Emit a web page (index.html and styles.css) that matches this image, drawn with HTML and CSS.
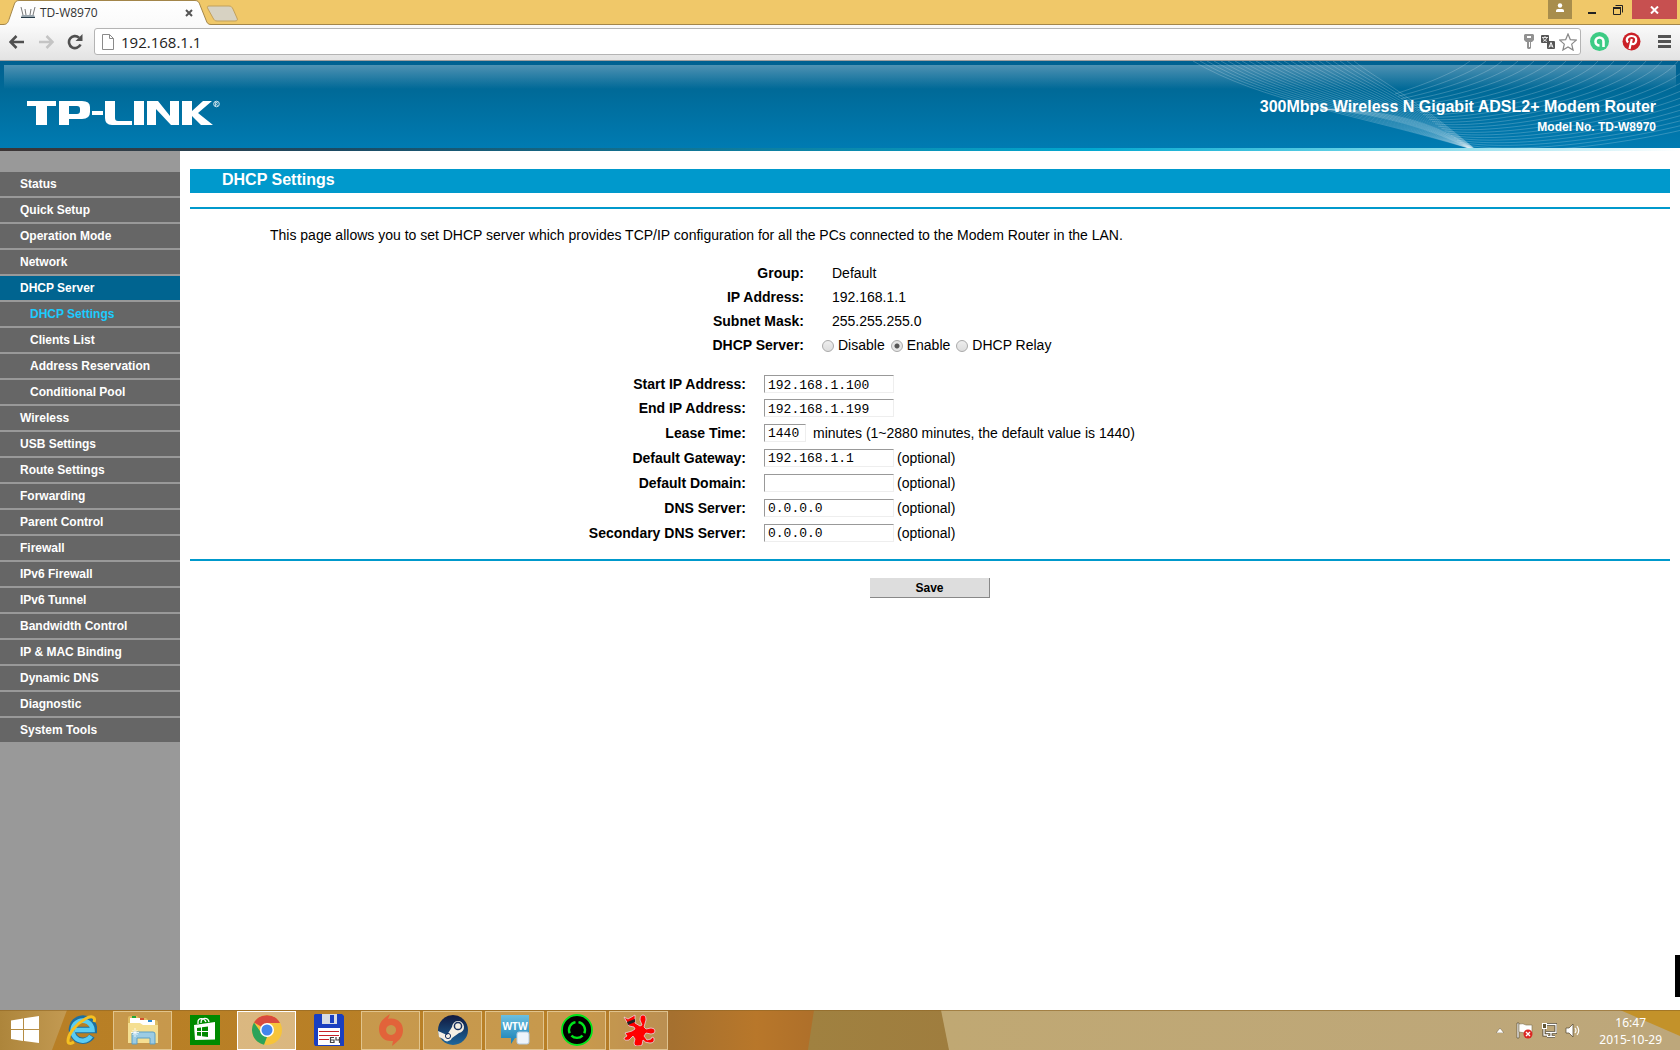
FILE: index.html
```html
<!DOCTYPE html>
<html lang="en">
<head>
<meta charset="utf-8">
<title>TD-W8970</title>
<link rel="stylesheet" href="styles.css">
</head>
<body>
<div class="desktop">
  <header class="browser">
    <div class="tabstrip">
      <svg class="tab-shape" width="240" height="26" viewBox="0 0 240 26">
        <defs><linearGradient id="tabfill" x1="0" y1="0" x2="0" y2="1"><stop offset="0" stop-color="#fff"/><stop offset="1" stop-color="#fafafa"/></linearGradient></defs>
        <path d="M0 24.500h3c4 0 5-2 6-5L14 5c1-3 2-4.500 5-4.500H195c3 0 4 1.500 5 4.500l6 15c1 3 2 4.500 5 4.500h29v2H0z" fill="url(#tabfill)"/>
        <path d="M0 24.500h3c4 0 5-2 6-5L14 5c1-3 2-4.500 5-4.500H195c3 0 4 1.500 5 4.500l6 15c1 3 2 4.500 5 4.500h29" fill="none" stroke="#a3864a"/>
        <path d="M209 6h20c2 0 3 1 4 3l4 9c1 2 0 3-2 3h-18c-2 0-3-1-4-3l-5-9c-1-2-1-3 1-3z" fill="#d7d2c2" stroke="#c2a15c"/>
      </svg>
      <div class="tab">
        <svg width="16" height="13" viewBox="0 0 16 13"><path d="M1 1l2 8M5 3l1 6M11 3l-1 6M15 1l-2 8" fill="none" stroke="#777" stroke-width="1"/><path d="M2 9h12l1 2H1z" fill="#9aa6ae"/><path d="M1 11h14v1H1z" fill="#263b48"/></svg>
        <span>TD-W8970</span>
        <button class="tab-close" type="button" aria-label="Close tab"><svg width="8" height="8" viewBox="0 0 8 8"><path d="M1 1l6 6M7 1l-6 6" stroke="#555" stroke-width="2"/></svg></button>
      </div>
      <div class="window-controls">
        <button class="user" type="button" aria-label="User"><svg width="10" height="10" viewBox="0 0 10 10"><circle cx="5" cy="2.500" r="2.200" fill="#fff"/><path d="M1 9V7.500Q1 6 3 6h4q2 0 2 1.500V9z" fill="#fff"/></svg></button>
        <button class="min" type="button" aria-label="Minimize"><svg width="10" height="10" viewBox="0 0 10 10"><path d="M1 7h8v2H1z" fill="#222"/></svg></button>
        <button class="max" type="button" aria-label="Restore"><svg width="10" height="10" viewBox="0 0 10 10"><path d="M.5 2.500h7v7h-7zM2.500 .5h7v7" fill="none" stroke="#222"/><path d="M0 2h8v2H0z" fill="#222"/></svg></button>
        <button class="close" type="button" aria-label="Close"><svg width="9" height="8" viewBox="0 0 9 8"><path d="M1 0.500l7 7M8 0.500l-7 7" stroke="#fff" stroke-width="2"/></svg></button>
      </div>
    </div>
    <div class="toolbar">
      <button class="nav-button" type="button" aria-label="Back"><svg width="16" height="14" viewBox="0 0 16 14"><path d="M1.500 7H15M7.500 1L1.500 7l6 6" fill="none" stroke="#505050" stroke-width="2.600"/></svg></button>
      <button class="nav-button" type="button" aria-label="Forward"><svg width="16" height="14" viewBox="0 0 16 14"><path d="M14.500 7H1M8.500 1l6 6-6 6" fill="none" stroke="#c4c4c4" stroke-width="2.600"/></svg></button>
      <button class="nav-button" type="button" aria-label="Reload"><svg width="16" height="16" viewBox="0 0 16 16"><path d="M13.500 10.500A6 6 0 1 1 12 3.600" fill="none" stroke="#505050" stroke-width="2.600"/><path d="M15.500 0v7h-7z" fill="#505050"/></svg></button>
      <div class="omnibox">
        <svg width="12" height="16" viewBox="0 0 12 16"><path d="M.5 .5h7l4 4v11H.5zM7.500 .5v4h4" fill="#fff" stroke="#8a8a8a"/></svg>
        <input class="url" type="text" value="192.168.1.1" aria-label="Address">
        <svg width="10" height="15" viewBox="0 0 10 15"><path d="M1 0h8l1 1v5L8 8H7v6l-1 1H4l-1-1V8H2L0 6V1z" fill="#929292"/><path d="M3 2h4v2H3zM5 8h1v5H5z" fill="#fff"/></svg>
        <svg width="14" height="14" viewBox="0 0 14 14"><rect width="8" height="8" rx="1" fill="#555"/><path d="M1 2.500h6M4 1v1.500M2 6.500q3-1 4-4M2 3q1 3 4 3.500" stroke="#fff" stroke-width=".8" fill="none"/><rect x="6" y="6" width="8" height="8" rx="1" fill="#555"/><path d="M8 12.500l2-5 2 5M9 11h2" stroke="#fff" fill="none"/></svg>
        <svg width="18" height="18" viewBox="0 0 18 18"><path d="M9 1l2.300 5.600 6 .5-4.600 4 1.400 6L9 13.900 3.900 17l1.400-5.900-4.600-4 6-.5z" fill="#fff" stroke="#888" stroke-width="1.200"/></svg>
      </div>
      <div class="extensions">
        <svg width="19" height="19" viewBox="0 0 19 19"><circle cx="9.500" cy="9.500" r="9.500" fill="#3dcb84"/><path d="M13.500 15V9.500A4 4 0 1 0 9.500 13.500" fill="none" stroke="#fff" stroke-width="2.600"/><circle cx="9.500" cy="9.700" r="2" fill="#3dcb84"/></svg>
        <svg width="19" height="19" viewBox="0 0 19 19"><circle cx="9.500" cy="9.500" r="9" fill="#cb2027"/><path d="M6 10.500C3.300 7.500 5.500 4 9.500 4c3.500 0 5 2 4.700 4.500-.4 3-2.500 4.500-4.700 3M9.800 7L7.500 17" fill="none" stroke="#fff" stroke-width="2.200"/></svg>
        <svg width="13" height="13" viewBox="0 0 13 13"><path d="M0 0h13v3H0zM0 5h13v3H0zM0 10h13v3H0z" fill="#535353"/></svg>
      </div>
    </div>
  </header>

  <div class="banner">
    <svg class="waves" width="500" height="87" viewBox="0 0 500 87" aria-hidden="true"></svg>
    <div class="shine"></div>
    <svg class="logo" width="194" height="26" viewBox="0 0 194 26" role="img" aria-label="TP-LINK">
      <g fill="#fff">
        <path d="M0 1h29v5H20v19H9V6H0z"/>
        <path fill-rule="evenodd" d="M32 1h23q8 0 8 6v5q0 7-8 7H42v6H32zM42 6v8h8q3 0 3-3V9q0-3-3-3z"/>
        <path d="M65 11h11v4H65z"/>
        <path d="M78 1h10v17q0 3 3 3h14v4H85q-7 0-7-7z"/>
        <path d="M107 1h10v24h-10z"/>
        <path d="M120 1h11l12 15V1h9v24h-8L129 9v16h-9z"/>
        <path d="M155 1h10v10l11-10h9l-14 12 15 12h-12l-9-9v9h-10z"/>
      </g>
      <circle cx="189.500" cy="4" r="2.800" fill="none" stroke="#fff" stroke-width=".8"/><path d="M188.500 6V2.500h1.500q1 1-.5 1.700l1 1.800" fill="none" stroke="#fff" stroke-width=".7"/>
    </svg>
    <div class="product">
      <h1>300Mbps Wireless N Gigabit ADSL2+ Modem Router</h1>
      <p>Model No. TD-W8970</p>
    </div>
  </div>

  <div class="page">
    <nav class="menu">
      <a href="#">Status</a>
      <a href="#">Quick Setup</a>
      <a href="#">Operation Mode</a>
      <a href="#">Network</a>
      <a class="open" href="#">DHCP Server</a>
      <a class="sub current" href="#">DHCP Settings</a>
      <a class="sub" href="#">Clients List</a>
      <a class="sub" href="#">Address Reservation</a>
      <a class="sub" href="#">Conditional Pool</a>
      <a href="#">Wireless</a>
      <a href="#">USB Settings</a>
      <a href="#">Route Settings</a>
      <a href="#">Forwarding</a>
      <a href="#">Parent Control</a>
      <a href="#">Firewall</a>
      <a href="#">IPv6 Firewall</a>
      <a href="#">IPv6 Tunnel</a>
      <a href="#">Bandwidth Control</a>
      <a href="#">IP &amp; MAC Binding</a>
      <a href="#">Dynamic DNS</a>
      <a href="#">Diagnostic</a>
      <a href="#">System Tools</a>
    </nav>
    <main class="content">
      <h2>DHCP Settings</h2>
      <form class="settings">
        <p class="intro">This page allows you to set DHCP server which provides TCP/IP configuration for all the PCs connected to the Modem Router in the LAN.</p>
        <div class="summary">
          <div class="row"><span class="label">Group:</span><span>Default</span></div>
          <div class="row"><span class="label">IP Address:</span><span>192.168.1.1</span></div>
          <div class="row"><span class="label">Subnet Mask:</span><span>255.255.255.0</span></div>
          <div class="row" role="radiogroup" aria-label="DHCP Server"><span class="label">DHCP Server:</span>
            <div class="choices">
              <label><input type="radio" name="dhcp">Disable</label>
              <label><input type="radio" name="dhcp" checked>Enable</label>
              <label><input type="radio" name="dhcp">DHCP Relay</label>
            </div>
          </div>
        </div>
        <div class="fields">
          <div class="row"><label class="label" for="start">Start IP Address:</label><input id="start" type="text" value="192.168.1.100"></div>
          <div class="row"><label class="label" for="end">End IP Address:</label><input id="end" type="text" value="192.168.1.199"></div>
          <div class="row tall"><label class="label" for="lease">Lease Time:</label><input id="lease" class="short" type="text" value="1440"><span>minutes (1~2880 minutes, the default value is 1440)</span></div>
          <div class="row tall"><label class="label" for="gateway">Default Gateway:</label><input id="gateway" type="text" value="192.168.1.1"><span>(optional)</span></div>
          <div class="row tall"><label class="label" for="domain">Default Domain:</label><input id="domain" type="text" value=""><span>(optional)</span></div>
          <div class="row tall"><label class="label" for="dns">DNS Server:</label><input id="dns" type="text" value="0.0.0.0"><span>(optional)</span></div>
          <div class="row tall"><label class="label" for="dns2">Secondary DNS Server:</label><input id="dns2" type="text" value="0.0.0.0"><span>(optional)</span></div>
        </div>
      </form>
      <button class="save" type="button">Save</button>
    </main>
    <div class="edge-block"></div>
  </div>

  <footer class="taskbar">
    <svg class="wallpaper" viewBox="0 0 1680 40" preserveAspectRatio="none" aria-hidden="true">
      <defs>
        <linearGradient id="w1"><stop offset="0" stop-color="#ad853b"/><stop offset="1" stop-color="#c39a52"/></linearGradient>
        <linearGradient id="w2"><stop offset="0" stop-color="#b87f25"/><stop offset=".35" stop-color="#b98027"/><stop offset=".4" stop-color="#a5702f"/><stop offset=".45" stop-color="#b8772a"/><stop offset=".5" stop-color="#aa6c2a"/></linearGradient>
        <linearGradient id="w3"><stop offset="0" stop-color="#a08140"/><stop offset="1" stop-color="#9f7d3e"/></linearGradient>
        <linearGradient id="w4"><stop offset="0" stop-color="#c0a873"/><stop offset="1" stop-color="#bda77b"/></linearGradient>
      </defs>
      <path fill="url(#w2)" d="M0 0h1680v40H0z"/>
      <path fill="url(#w1)" d="M0 0h67L52 40H0z"/>
      <path fill="url(#w3)" d="M814 0h140v40H808z"/>
      <path fill="url(#w4)" d="M941 0h739v40H949z"/>
      <path fill="#c3922a" d="M1620 0h60v26z"/>
      <path fill="#8f6624" opacity=".6" d="M0 0h1680v1H0z"/>
    </svg>
    <div class="apps">
      <button class="app start" type="button" aria-label="Start"><svg width="28" height="28" viewBox="0 0 28 28"><path d="M0 4.500L12 2.500V13H0zM13 2.300L28 0v13H13zM0 14h12v11L0 23zM13 14h15v13l-15-2z" fill="#fff"/></svg></button>
      <button class="app" type="button" aria-label="Internet Explorer"><svg width="32" height="32" viewBox="0 0 32 32"><path d="M27 22A11 11 0 1 1 29 16H11" fill="none" stroke="#1d6f9f" stroke-width="6.500"/><path d="M26 22A10 10 0 1 1 27.500 16H10" fill="none" stroke="#5bcdf3" stroke-width="4.500"/><path d="M29 8c2-5-2-7-9-3C11 10 3 20 3 27c0 3 3 3 6 1" fill="none" stroke="#f5c021" stroke-width="3"/></svg></button>
      <button class="app running" type="button" aria-label="File Explorer"><svg width="32" height="30" viewBox="0 0 32 30"><path d="M1 3q0-2 2-2h7l2 2h7l2 2h7q3 0 3 3v18H1z" fill="#dfbd62"/><path d="M3 3h14v6H3zM12 5h16v5H12z" fill="#fff"/><path d="M5 1h4v2H5z" fill="#22a838"/><path d="M13 3h4v2h-4z" fill="#d4532f"/><path d="M21 5h4v2h-4z" fill="#2c8bd0"/><path d="M1 8h12l3 2h15v18H1z" fill="#f5df92"/><path d="M5 29V19q0-2 2-2h19q2 0 2 2v10h-5v-6H10v6z" fill="#9ccce4" stroke="#5d9fc4"/><path d="M8 13v9M4 17.500h8M5.500 15l5 5M10.500 15l-5 5" stroke="#fff" stroke-width=".8"/></svg></button>
      <button class="app" type="button" aria-label="Store"><svg width="30" height="30" viewBox="0 0 30 30"><path fill="#008a00" d="M0 0h30v30H0z"/><path d="M4 10l21-3v17.500L5 25z" fill="#fff"/><path d="M8 9V7c0-4 6-5 8 0M11 8c0-6 7-6 8-1" fill="none" stroke="#fff" stroke-width="1.300"/><path d="M7 13l4-.5V16H7zM12 12.300l6-.8V16h-6zM7 17h4v4l-4-.5zM12 17h6v5l-6-.8z" fill="#008a00"/></svg></button>
      <button class="app running active" type="button" aria-label="Chrome"><svg width="30" height="30" viewBox="0 0 30 30"><circle cx="15" cy="15" r="15" fill="#f6c43b"/><path d="M15 15L2 7.500A15 15 0 0 1 28 8H15z" fill="#d94a3e"/><path d="M2 7.500L10 19l5 3-3 7.700A15 15 0 0 1 2 7.500z" fill="#2ba35a"/><circle cx="15" cy="15" r="7" fill="#fff"/><circle cx="15" cy="15" r="5.500" fill="#4285ed"/></svg></button>
      <button class="app" type="button" aria-label="Total Commander"><svg width="32" height="32" viewBox="0 0 32 32"><path d="M2 0h27l2 2v30H2L1 30V1z" fill="#1a3fc0"/><path d="M9 0h15v10H9z" fill="#d8dce2"/><path d="M17 1h4v8h-4z" fill="#1a3fc0"/><path d="M5 14h22v17H5z" fill="#fff"/><path d="M6 17.500h20M6 21.500h20M6 25.500h10M25.500 25.500h1" stroke="#c62127" stroke-width="1.200"/><path d="M21 23.500h-3.500v5H21v-2.500h-3.500M23 23v3h3.500M26.500 23v6" fill="none" stroke="#444" stroke-width="1.200"/></svg></button>
      <button class="app running" type="button" aria-label="Origin"><svg width="26" height="32" viewBox="0 0 26 32"><path fill-rule="evenodd" d="M12 0l-2 5c9-2 15 4 15 11 0 8-5 11-11 16l1-5C6 28 1 22 1 15 1 8 6 4 12 0zM13 11a5 5 0 1 0 .1 0z" fill="#e2633a"/></svg></button>
      <button class="app running" type="button" aria-label="Steam"><svg width="30" height="30" viewBox="0 0 30 30"><defs><linearGradient id="st" x1="0" y1="0" x2="0" y2="1"><stop offset="0" stop-color="#11183e"/><stop offset="1" stop-color="#1d679c"/></linearGradient></defs><circle cx="15" cy="15" r="15" fill="url(#st)"/><path d="M0 16l9 4 5-8a6 6 0 1 1 7 6l-7 5a5 5 0 0 1-9 1l-4-2z" fill="#f4efe4"/><circle cx="20" cy="11" r="3.600" fill="none" stroke="#17305f" stroke-width="1.500"/><circle cx="10" cy="21" r="2.600" fill="none" stroke="#17305f"/></svg></button>
      <button class="app running" type="button" aria-label="WTW"><svg width="30" height="30" viewBox="0 0 30 30"><defs><linearGradient id="wt" x1="0" y1="0" x2="0" y2="1"><stop offset="0" stop-color="#6cbfe0"/><stop offset="1" stop-color="#167fb5"/></linearGradient></defs><path d="M1 0h28v23H15l-4 6v-6H1z" fill="url(#wt)"/><text x="15" y="15" text-anchor="middle" class="wtw">WTW</text><rect x="17" y="17" width="12" height="12" rx="2" fill="#eef5fb" stroke="#b4cbe0"/></svg></button>
      <button class="app running" type="button" aria-label="Sync"><svg width="32" height="32" viewBox="0 0 32 32"><circle cx="16" cy="16" r="15" fill="#000" stroke="#00e51b" stroke-width="1.800"/><g fill="none" stroke="#00e51b" stroke-width="2.400"><path d="M17.500 8.100A8 8 0 0 1 23.300 19.200M21.600 21.600A8 8 0 0 1 10.400 21.600M8.700 19.200A8 8 0 0 1 14.500 8.100"/></g></svg></button>
      <button class="app running" type="button" aria-label="Red devil"><svg width="34" height="32" viewBox="0 0 34 32"><path d="M2 3l4 2 7-4v8l5 3 2-1-2-5q0-5 3-5t3 5l-2 7 2 2 5-1q4 0 4 3t-4 3l-5-1-2 3 3 4 4-1 1-2 2 1q1 5-4 5t-7-3l-1 5q-1 1-5 1-3 0-3-3l1-4-2-3-4 4q-5 1-5-2l3-2-2-3 7-2 3-2-1-2-5-1z" fill="#f00" stroke="#e8d4e0" stroke-width=".8"/><path d="M5 8l8-3v3l-7 3z" fill="#222"/></svg></button>
    </div>
    <div class="tray">
      <svg width="8" height="5" viewBox="0 0 8 5"><path d="M0 5l4-5 4 5z" fill="#fff" stroke="#6d5c3c" stroke-width=".5"/></svg>
      <svg width="17" height="17" viewBox="0 0 17 17"><path d="M1 1h2v15H1z" fill="#fff" stroke="#574b35" stroke-width=".7"/><path d="M3 2q4-1 7 1h6v8H9L3 10z" fill="#fff" stroke="#7e6e4f" stroke-width=".6"/><circle cx="12" cy="12" r="4.500" fill="#dc2522"/><path d="M10 10l4 4M14 10l-4 4" stroke="#fff" stroke-width="1.400"/></svg>
      <svg width="16" height="16" viewBox="0 0 16 16"><path d="M6 2.500h9v8H5M10 11v3M6 14.500h8M3 7v6h4" fill="none" stroke="#4e432e" stroke-width="3"/><path d="M6 2.500h9v8H5M10 11v3M6 14.500h8M3 7v6h4" fill="none" stroke="#fff" stroke-width="1.300"/><rect x="1.500" y="1.500" width="4" height="5" fill="#645838" stroke="#fff"/></svg>
      <svg width="16" height="15" viewBox="0 0 16 15"><path d="M1 5h3l4-4v13l-4-4H1z" fill="#fff" stroke="#51452f" stroke-width=".7"/><path d="M10 5q2 2.500 0 5M12 3q3.500 4.500 0 9" fill="none" stroke="#fff" stroke-width="1.200"/></svg>
      <div class="clock"><span>16:47</span><span>2015-10-29</span></div>
    </div>
  </footer>
</div>
<script src="waves.js"></script>
</body>
</html>
```

FILE: styles.css
```css
* { box-sizing: border-box; }
body { margin: 0; font-family: "Liberation Sans", Arial, sans-serif; font-size: 14px; color: #000; background: #fff; }
h1, h2, p { margin: 0; }
button { border: 0; padding: 0; background: none; font: inherit; color: inherit; }
svg { display: block; flex: none; }
.desktop { display: flex; flex-direction: column; min-height: 100vh; }

.tabstrip { display: flex; position: relative; height: 25px; background: #f0c869; box-shadow: inset 0 -1px #a3864a; }
.tab-shape { position: absolute; left: 0; top: 0; }
.tab { position: relative; display: flex; align-items: center; gap: 4px; width: 193px; margin-left: 20px; font: 12px "Open Sans", sans-serif; color: #333; }
.tab-close { margin-left: auto; margin-right: 20px; }
.window-controls { display: flex; margin-left: auto; margin-right: 3px; height: 19px; }
.window-controls button { display: flex; align-items: center; justify-content: center; width: 26px; }
.window-controls .user { width: 24px; margin-right: 8px; background: #a88d4c; padding-bottom: 3px; }
.window-controls .min { width: 24px; }
.window-controls .max { width: 28px; }
.window-controls .close { width: 45px; background: #c75050; }
.toolbar { display: flex; align-items: center; height: 36px; padding: 0 9px 2px; background: linear-gradient(#fafafa, #e3e3e3); border-bottom: 1px solid #a0a0a0; }
.nav-button { width: 29px; padding-right: 12px; }
.omnibox { display: flex; flex: 1; align-items: center; gap: 7px; height: 27px; margin-left: -2px; padding: 0 3px 0 7px; background: #fff; border: 1px solid #b4b4b4; border-radius: 3px; }
.omnibox svg:last-child { margin-left: -3px; }
.url { flex: 1; border: 0; padding: 0; outline: 0; font: 15px "Open Sans", sans-serif; color: #222; background: none; }
.extensions { display: flex; align-items: center; gap: 13px; margin-left: 9px; }
.extensions svg:last-child { margin-left: 4px; }

.banner { position: relative; display: flex; justify-content: space-between; height: 90px; padding: 36px 24px 0 27px; background: linear-gradient(90deg, #3c3434, #1c4a63 20%, #02a8d0 65%, #5fcfe4 80%, #fff) bottom / 100% 3px no-repeat, linear-gradient(#006090, #006a98 34%, #007bb2) top / 100% 87px no-repeat; }
.shine { position: absolute; left: 4px; right: 4px; top: 4px; height: 24px; background: linear-gradient(rgba(255,255,255,.31), rgba(255,255,255,0)); }
.waves { position: absolute; right: 0; top: 0; }
.logo { position: relative; margin-top: 3px; }
.product { position: relative; color: #fff; font-weight: bold; text-align: right; }
.product h1 { font-size: 16px; line-height: 20px; }
.product p { font-size: 12px; line-height: 20px; }

.page { position: relative; display: flex; flex: 1; }
.menu { width: 180px; padding-top: 21px; background: #999; }
.menu a { display: block; height: 24px; margin-bottom: 2px; padding-left: 20px; font-size: 12px; font-weight: bold; line-height: 24px; color: #fff; background: #666; text-decoration: none; }
.menu .open { background: #006490; }
.menu .sub { padding-left: 30px; }
.menu .current { color: #1ccbff; }

.content { flex: 1; padding: 18px 10px 0; }
.content h2 { height: 24px; padding-left: 32px; background: #09c; color: #fff; font-size: 16px; line-height: 22px; }
.settings { margin-top: 14px; border: solid #09c; border-width: 2px 0; padding-bottom: 14px; }
.intro { padding: 16px 0 16px 80px; line-height: 20px; }
.row { display: flex; align-items: center; height: 24px; }
.row.tall { height: 25px; }
.row .label { font-weight: bold; text-align: right; }
.summary .label { width: calc(50% - 126px); margin-right: 28px; }
.choices { display: flex; gap: 6px; margin-left: -10px; }
.choices label { display: flex; align-items: center; }
.choices input { appearance: none; width: 12px; height: 12px; margin: 1px 4px 0 0; border: 1px solid #aaa; border-radius: 50%; background: linear-gradient(#eee, #ddd); }
.choices input:checked { background: radial-gradient(circle, #555 0 2px, #e6e6e6 3px); }
.fields { margin-top: 15px; }
.fields .label { width: calc(50% - 184px); margin-right: 18px; }
.fields input { width: 130px; height: 18px; margin-right: 3px; padding: 2px 3px 0; border: 1px solid; border-color: #999 #eee #eee #999; font: 13px "Liberation Mono", monospace; color: #000; outline: 0; }
.fields .short { width: 42px; margin-right: 7px; }
.save { display: block; width: 120px; height: 20px; margin: 17px auto 0; background: #ddd; border: solid #888; border-width: 0 1px 1px 0; font-size: 12px; font-weight: bold; }
.edge-block { position: absolute; right: 0; bottom: 13px; width: 5px; height: 42px; background: #000; }

.taskbar { position: relative; display: flex; justify-content: space-between; height: 40px; }
.wallpaper { position: absolute; inset: 0; width: 100%; height: 100%; }
.apps { position: relative; display: flex; align-items: center; }
.app { display: flex; align-items: center; justify-content: center; width: 59px; height: 39px; margin-right: 3px; }
.app.start { width: 50px; margin-right: 1px; }
.running { background: rgba(226,201,150,.35); border: 1px solid rgba(240,220,175,.65); }
.active { background: rgba(236,214,177,.65); border: 1px solid #fff; }
.wtw { font: bold 10px "Open Sans", sans-serif; fill: #fff; }
.tray { position: relative; display: flex; align-items: center; gap: 8px; padding-right: 18px; }
.tray svg:first-child { margin-right: 4px; }
.clock { display: flex; flex-direction: column; align-items: center; margin-left: 10px; padding-top: 1px; font: 12px/17px "Noto Sans", sans-serif; font-size: 12px; color: #fff; }
```

FILE: waves.js
```javascript
// Two fans of thin curves that cross behind the product name.
const svg = document.querySelector('.waves');
const draw = (d, opacity) => {
  const path = document.createElementNS('http://www.w3.org/2000/svg', 'path');
  path.setAttribute('d', d);
  path.setAttribute('fill', 'none');
  path.setAttribute('stroke', '#fff');
  path.setAttribute('stroke-opacity', opacity);
  svg.append(path);
};
for (let i = 0; i < 24; i++) {
  draw(`M${13 + i * 7} 0 C${80 + i * 5} ${40 - i}, ${180 + i * 2} ${54 - i}, ${288 + i / 4} 87`, 0.2);
  draw(`M${290 + i * 16} 0 C${275 + i * 15} ${12 + i * 2}, ${240 + i * 6} ${25 + i * 3.4}, ${215 + i * 3.1} ${33 + i * 2.3}`, 0.2);
}
for (let i = 0; i < 8; i++) {
  draw(`M140 48 C${190 + i} ${52 - i / 2}, ${240 + i} ${63 - i}, ${289 + i / 2} 87`, 0.14);
}
```
